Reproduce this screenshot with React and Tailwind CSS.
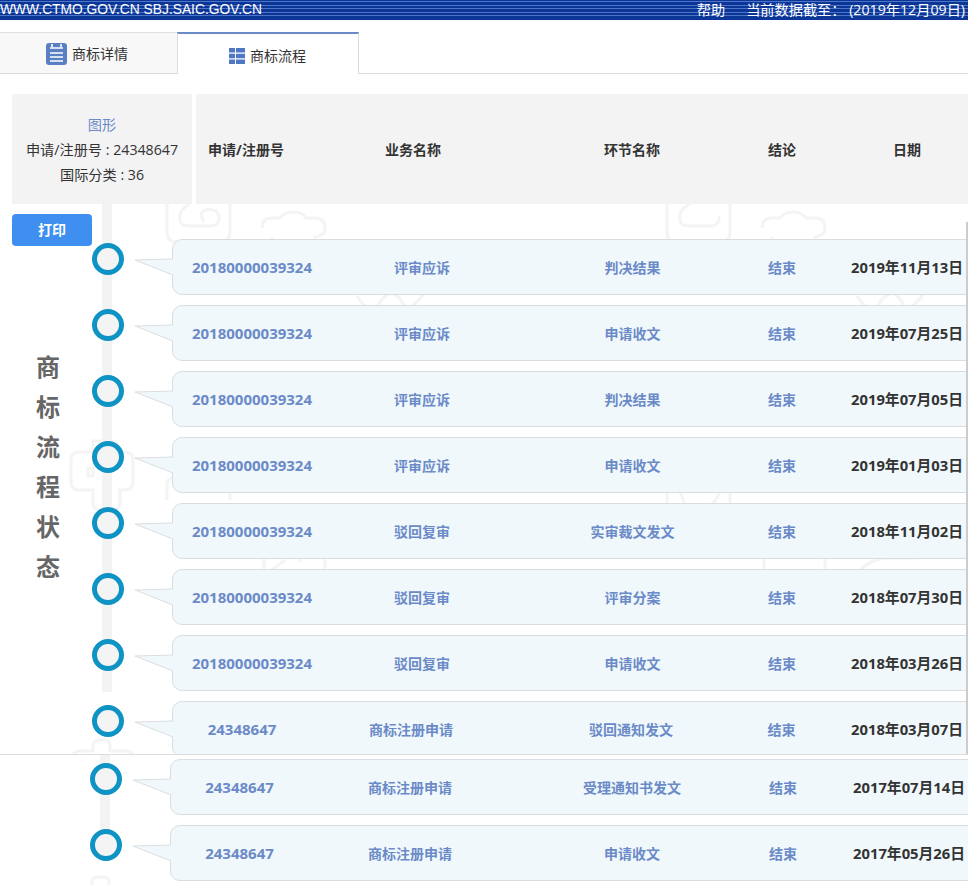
const cols = {
  a: "grid-cols-[158px_182px_239px_60px_1fr]",
  b: "grid-cols-[138px_200px_240px_61px_1fr]",
  c: "grid-cols-[137px_204px_240px_62px_1fr]",
};

const rowsTop = [
  ["20180000039324", "评审应诉", "判决结果", "2019年11月13日", "a"],
  ["20180000039324", "评审应诉", "申请收文", "2019年07月25日", "a"],
  ["20180000039324", "评审应诉", "判决结果", "2019年07月05日", "a"],
  ["20180000039324", "评审应诉", "申请收文", "2019年01月03日", "a"],
  ["20180000039324", "驳回复审", "实审裁文发文", "2018年11月02日", "a"],
  ["20180000039324", "驳回复审", "评审分案", "2018年07月30日", "a"],
  ["20180000039324", "驳回复审", "申请收文", "2018年03月26日", "a"],
  ["24348647", "商标注册申请", "驳回通知发文", "2018年03月07日", "b"],
];

const rowsBottom = [
  ["24348647", "商标注册申请", "受理通知书发文", "2017年07月14日", "c"],
  ["24348647", "商标注册申请", "申请收文", "2017年05月26日", "c"],
];

function Row({ row }) {
  const [no, biz, step, date, col] = row;
  return (
    <div className="flex items-start">
      <div className="w-8 h-8 mt-1 rounded-full border-[5px] border-[#0e93c4] bg-[#f4f4f4] shrink-0 relative" />
      <svg width="39" height="56" viewBox="0 0 39 56" className="ml-[10px] -mr-px shrink-0 relative z-10">
        <path d="M39 20 L1 21 L39 36" fill="#f0f8fb" stroke="#dadee1" strokeWidth="1" />
      </svg>
      <div className={`grid ${cols[col]} items-center w-[810px] h-14 pt-px shrink-0 bg-[#f0f8fb] border border-[#d9dde0] rounded-[10px] text-center text-sm font-semibold text-[#6b8ac8]`}>
        <div className="text-[15px] font-bold">{no}</div>
        <div>{biz}</div>
        <div>{step}</div>
        <div>结束</div>
        <div className="text-left pl-[39px] text-[14.8px] font-bold text-[#333]">{date}</div>
      </div>
    </div>
  );
}

function Watermark() {
  return (
    <svg width="968" height="885" className="absolute left-0 top-0 pointer-events-none" fill="none" stroke="#f4f4f4" strokeWidth="3">
      {/* top band */}
      <path d="M167 204 V232 Q167 242 177 242 H220 Q230 242 230 232 V204" />
      <path d="M190 204 Q178 210 180 220 Q180 226 190 226 H210 Q220 226 219 216 Q216 208 206 210 Q198 212 204 222" />
      <path d="M262 228 Q262 218 272 218 H280 Q284 212 294 212 Q302 212 306 218 H315 Q325 218 325 228 Q325 236 315 237 V242 M272 237 V242" />
      <path d="M667 204 V232 Q667 242 677 242 H720 Q730 242 730 232 V204" />
      <path d="M690 204 Q678 210 680 220 Q680 226 690 226 H710 Q720 226 719 216" />
      <path d="M762 228 Q762 218 772 218 H780 Q784 212 794 212 Q802 212 806 218 H815 Q825 218 825 228 Q825 236 815 237 V242 M772 237 V242" />
      {/* gaps between rows */}
      <path d="M357 296 Q362 304 366 306 M378 306 Q382 296 392 293 Q400 296 404 306 M412 306 Q420 300 423 294" />
      <path d="M857 296 Q862 304 866 306 M878 306 Q882 296 892 293 Q900 296 904 306 M912 306 Q920 300 923 294" />
      <path d="M667 492 V504 M730 492 V504 M680 492 Q684 500 684 504 M720 492 Q716 500 712 504" />
      <path d="M264 558 V570 M325 558 V570 M285 560 L272 570 M300 556 V562" />
      <path d="M764 558 V570 M825 558 V570 M860 570 Q870 560 885 558 H918" />
      {/* cross on the left */}
      <path d="M93 441 Q97 441 100 441 H112 Q119 441 120 452 H125 Q133 452 133 460 V482 Q133 490 125 490 H120 V502 Q120 510 112 510 H100 Q93 510 93 502 V490 H79 Q71 490 71 482 V460 Q71 452 79 452 H93 Z" />
      <path d="M88 468 V476 H93 V468 Z" />
      <path d="M167 500 V484 Q167 478 173 478 H178 M218 478 H226 Q230 478 230 484 V500" />
      {/* lower band */}
      <path d="M93 752 V746 Q93 740 100 740 H104 Q110 740 110 746 V752 M73 755 Q74 752 80 751 H93 M110 751 H126 Q132 752 133 755" />
      <path d="M92 885 V882 Q92 877 98 877 H104 Q109 877 109 882 V885" />
    </svg>
  );
}

function DetailIcon() {
  return (
    <svg width="21" height="22" viewBox="0 0 21 22">
      <rect x="0" y="0" width="21" height="22" rx="3" fill="#5a80c4" />
      <path d="M6 1 V4 M15 1 V4 M4 5 H17 M4 10 H17 M4 14 H17 M4 18 H17" stroke="#fff" strokeWidth="1.6" />
    </svg>
  );
}

function FlowIcon() {
  return (
    <svg width="16" height="16" viewBox="0 0 16 16" fill="#4f78c2">
      <rect x="0" y="0" width="6" height="4.5" />
      <rect x="7" y="0" width="9" height="4.5" />
      <rect x="0" y="5.75" width="6" height="4.5" />
      <rect x="7" y="5.75" width="9" height="4.5" />
      <rect x="0" y="11.5" width="6" height="4.5" />
      <rect x="7" y="11.5" width="9" height="4.5" />
    </svg>
  );
}

export default function App() {
  return (
    <div className="relative w-[968px] h-[885px] overflow-hidden bg-white font-['Open_Sans','Noto_Sans_CJK_SC',sans-serif] text-[#333]">
      <Watermark />

      <div className="relative">
        {/* Top bar */}
        <div className="h-5 flex items-center justify-between bg-[#0b3596] bg-[linear-gradient(to_bottom,#0b3596_1px,#4f76c6_1px,#4f76c6_2px,#0b3596_2px,#0b3596_5px,#4f76c6_5px,#4f76c6_6px,#0b3596_6px,#0b3596_8px,#4f76c6_8px,#4f76c6_9px,#0b3596_9px,#0b3596_12px,#4f76c6_12px,#4f76c6_13px,#0b3596_13px,#0b3596_15px,#4f76c6_15px,#4f76c6_16px,#0b3596_16px)] text-white text-[14.2px] leading-5">
          <div className="font-['Liberation_Sans','Noto_Sans_CJK_SC',sans-serif] text-[13.8px]">WWW.CTMO.GOV.CN SBJ.SAIC.GOV.CN</div>
          <div className="flex pr-[3px]">
            <span className="mr-[21px]">帮助</span>
            <span>当前数据截至： (2019年12月09日)</span>
          </div>
        </div>

        {/* Tabs */}
        <div className="mt-3 h-[42px] flex border-b border-[#dcdcdc] text-sm">
          <div className="w-[177px] bg-[#f8f8f8] border-t border-[#e0e0e0] flex items-center pl-[46px] gap-[5px] pt-px">
            <DetailIcon />
            <span>商标详情</span>
          </div>
          <div className="w-[182px] bg-white border-x border-t-2 border-x-[#dcdcdc] border-t-[#6b8ac8] -mb-px flex items-center pl-[51px] gap-[5px] pt-[3px]">
            <FlowIcon />
            <span>商标流程</span>
          </div>
        </div>

        {/* Table head */}
        <div className="mt-5 ml-3 h-[110px] flex gap-1">
          <div className="w-[180px] bg-[#f3f3f3] flex flex-col items-center justify-center text-[14.2px] leading-[25px]">
            <div className="text-[#6b8ac8]">图形</div>
            <div>申请/注册号 : 24348647</div>
            <div>国际分类 : 36</div>
          </div>
          <div className="flex-1 bg-[#f3f3f3] grid grid-cols-[100px_234px_204px_96px_1fr] items-center text-center text-sm font-bold pt-px">
            <div>申请/注册号</div>
            <div>业务名称</div>
            <div>环节名称</div>
            <div>结论</div>
            <div className="text-left pl-[63px]">日期</div>
          </div>
        </div>

        {/* Upper timeline */}
        <div className="relative h-[551px] border-b border-[#dcdcdc] overflow-hidden flex">
          <div className="absolute left-[102px] top-0 w-[10px] h-[488px] bg-[#f3f3f3]" />
          <div className="absolute right-0 top-[18px] bottom-0 w-[2px] bg-[#cccccc] z-20" />
          <div className="w-[92px] shrink-0 pl-3 pt-[10px] relative">
            <button className="w-20 h-8 bg-[#3e8ff0] rounded text-white text-sm font-bold">打印</button>
            <div className="mt-[101px] ml-6 w-6 text-2xl leading-10 font-bold text-[#666] text-center">
              {"商标流程状态".split("").map((c) => (
                <div key={c}>{c}</div>
              ))}
            </div>
          </div>
          <div className="absolute left-[92px] top-[35px] flex flex-col gap-[10px]">
            {rowsTop.map((r, i) => (
              <Row key={i} row={r} />
            ))}
          </div>
        </div>

        {/* Lower timeline */}
        <div className="relative pl-[90px] pt-1 flex flex-col gap-[10px]">
          <div className="absolute left-[100px] top-0 w-[10px] h-[76px] bg-[#f3f3f3]" />
          {rowsBottom.map((r, i) => (
            <Row key={i} row={r} />
          ))}
        </div>
      </div>
    </div>
  );
}
